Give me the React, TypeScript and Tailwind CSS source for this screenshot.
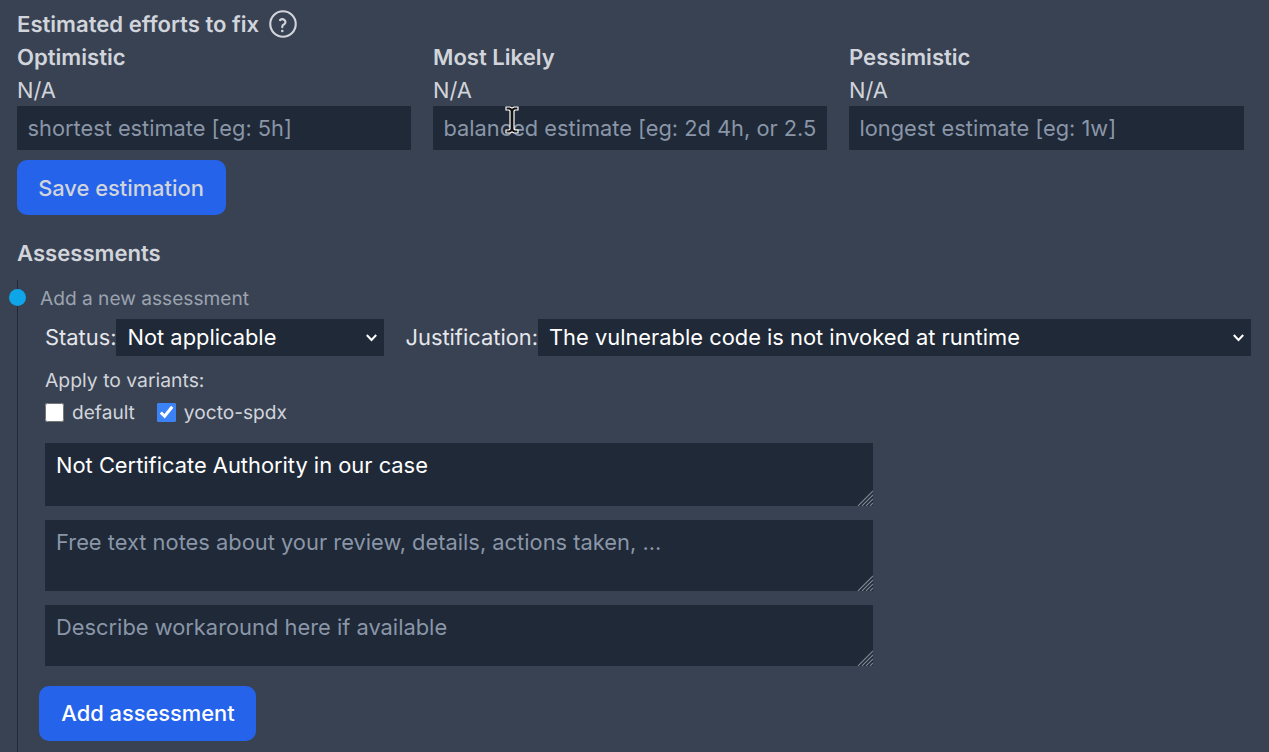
import React from "react";

const inter = "font-['Inter',sans-serif] [text-rendering:geometricPrecision]";
const field = "h-[44px] w-full bg-[#1f2937] px-[10.5px] text-[21.8px] text-[#e5e7eb] placeholder:text-[#8a96a8] outline-none";
const area = "block w-full h-full resize-none bg-[#1f2937] px-[11px] py-[8px] text-[21.875px] leading-[28px] text-white placeholder:text-[#8a96a8] outline-none";
const sel = "h-[37px] w-full appearance-none bg-[#1f2937] pl-[11px] text-[21.875px] text-white outline-none";

function Estimate({ label, ph }: { label: string; ph: string }) {
  return (
    <div className="flex flex-col">
      <div className="h-[33px] text-[22.1px] font-semibold leading-[35px] text-[#d1d5db]">{label}</div>
      <div className="h-[32px] text-[21.875px] leading-[35px] text-[#d1d5db]">N/A</div>
      <input className={field} placeholder={ph} readOnly />
    </div>
  );
}

function Select({ value, width }: { value: string; width: string }) {
  return (
    <span className={`relative block ${width}`}>
      <select className={sel} defaultValue={value}>
        <option value={value}>{value}</option>
      </select>
      <svg className="pointer-events-none absolute right-[7px] top-[15px]" width="11" height="8" viewBox="0 0 11 8" fill="none" stroke="#fff" strokeWidth="2">
        <path d="M0.8 1 5.5 6 10.2 1" />
      </svg>
    </span>
  );
}

function Area({ height, value, ph }: { height: string; value?: string; ph?: string }) {
  return (
    <div className={`relative w-[828px] ${height}`}>
      <textarea className={area} defaultValue={value} placeholder={ph} />
      <svg className="pointer-events-none absolute bottom-0 right-0" width="16" height="16" viewBox="0 0 16 16" stroke="#7f8794" strokeWidth="1.1">
        <path d="M1 16 16 1M5 16 16 5M9 16 16 9M13 16 16 13" />
      </svg>
    </div>
  );
}

export default function App() {
  return (
    <div className={`${inter} relative h-[752px] w-[1269px] overflow-hidden bg-[#394253]`}>
      <div className="flex flex-col pl-[17px] pt-[8px]">
        <div className="flex h-[33px] items-center gap-[7px]">
          <span className="pt-[2px] text-[22.1px] font-semibold leading-[33px] text-[#d1d5db]">Estimated efforts to fix</span>
          <svg className="-mt-[2px]" width="34" height="34" viewBox="0 0 24 24" fill="none" stroke="#d1d5db" strokeWidth="1.5" strokeLinecap="round" strokeLinejoin="round">
            <path d="M9.88 9.24c.88-.77 2.3-.77 3.18 0 .88.77.88 2.02 0 2.79-.15.13-.32.24-.5.33-.55.26-1.06.73-1.06 1.35v.56M21 12a9 9 0 1 1-18 0 9 9 0 0 1 18 0Z" />
            <path d="M11.5 16.9h.01" strokeWidth="1.8" />
          </svg>
        </div>
        <div className="grid grid-cols-[394px_394px_395px] gap-[22px]">
          <Estimate label="Optimistic" ph="shortest estimate [eg: 5h]" />
          <Estimate label="Most Likely" ph="balanced estimate [eg: 2d 4h, or 2.5d]" />
          <Estimate label="Pessimistic" ph="longest estimate [eg: 1w]" />
        </div>
        <button className="mt-[10px] h-[55px] w-[209px] rounded-[10px] bg-[#2563eb] pr-[1px] pt-[2px] text-[21.875px] font-medium text-[#d1d5db]">Save estimation</button>
        <div className="mt-[22px] h-[33px] text-[22.1px] font-semibold leading-[35px] text-[#d1d5db]">Assessments</div>
        <div className="mt-[10px] border-l border-[#1f2937] pl-[22px] pb-[20px]">
          <div className="relative mt-[7px] h-[22px] text-[19.14px] leading-[22px] text-[#9ca3af]">
            <span className="absolute left-[-31px] top-[2px] h-[17px] w-[17px] rounded-full bg-[#0ea5e9]" />
            Add a new assessment
          </div>
          <div className="ml-[5px] mt-[10px] flex items-center gap-[21px] text-[21.875px] text-[#e5e7eb]">
            <label className="flex items-center">
              <span className="pt-[2px]">Status:</span>
              <Select value="Not applicable" width="w-[268px]" />
            </label>
            <label className="flex items-center">
              <span className="pt-[2px]">Justification:</span>
              <Select value="The vulnerable code is not invoked at runtime" width="w-[713px]" />
            </label>
          </div>
          <div className="ml-[5px] mt-[12px] h-[24px] text-[19.35px] leading-[24px] text-[#d1d5db]">Apply to variants:</div>
          <div className="ml-[5px] mt-[9px] flex h-[22px] items-center gap-[22px] text-[19.14px] text-[#d1d5db]">
            <label className="flex items-center gap-[8px]">
              <input type="checkbox" className="m-0 h-[19px] w-[19px] accent-[#3b82f6]" readOnly />
              <span>default</span>
            </label>
            <label className="flex items-center gap-[8px]">
              <input type="checkbox" className="m-0 h-[19px] w-[19px] accent-[#3b82f6]" checked readOnly />
              <span>yocto-spdx</span>
            </label>
          </div>
          <div className="ml-[5px] mt-[20px] flex flex-col gap-[14px]">
            <Area height="h-[63px]" value="Not Certificate Authority in our case" />
            <Area height="h-[71px]" ph="Free text notes about your review, details, actions taken, ..." />
            <Area height="h-[61px]" ph="Describe workaround here if available" />
          </div>
          <button className="-ml-[1px] mt-[20px] h-[55px] w-[217px] rounded-[10px] bg-[#2563eb] pl-[1px] text-[21.875px] font-medium text-white">Add assessment</button>
        </div>
      </div>
      <svg className="absolute left-[504px] top-[104px]" width="16" height="32" viewBox="0 0 16 30">
        <path d="M2 2h4l2 1 2-1h4v3h-3l-1 1v18l1 1h3v3h-4l-2-1-2 1H2v-3h3l1-1V6L5 5H2Z" fill="#111" stroke="#fff" strokeWidth="1.2" />
      </svg>
    </div>
  );
}
